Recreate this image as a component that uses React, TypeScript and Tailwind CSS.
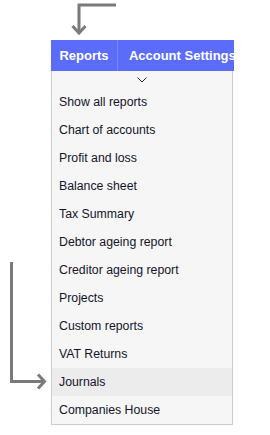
const items = [
  "Show all reports",
  "Chart of accounts",
  "Profit and loss",
  "Balance sheet",
  "Tax Summary",
  "Debtor ageing report",
  "Creditor ageing report",
  "Projects",
  "Custom reports",
  "VAT Returns",
  "Journals",
  "Companies House",
]

export default function App() {
  return (
    <div className="relative h-[435px] w-[270px] overflow-hidden bg-white font-['Liberation_Sans',Arial,sans-serif]">
      {/* annotation arrows */}
      <svg className="absolute left-0 top-0" width="120" height="40" viewBox="0 0 120 40">
        <path d="M116 5 H79 V33" fill="none" stroke="#7a7a7a" strokeWidth="3" />
        <path d="M72.5 26 L79 33 L85.5 26" fill="none" stroke="#7a7a7a" strokeWidth="3" />
      </svg>
      <svg className="absolute left-0 top-[258px]" width="50" height="140" viewBox="0 0 50 140">
        <path d="M11.5 4 V123.5 H44" fill="none" stroke="#7a7a7a" strokeWidth="3" />
        <path d="M38 116.5 L44.5 123.5 L38 130.5" fill="none" stroke="#7a7a7a" strokeWidth="3" />
      </svg>

      <div className="ml-[51px] pt-[40px] w-[183px]">
        <div className="flex h-[31px] items-center bg-[#5c6cfa] text-[13px] font-bold text-white">
          <div className="flex h-full w-[68px] items-center justify-center border-r border-[#7a88ff]">
            Reports
          </div>
          <div className="whitespace-nowrap overflow-hidden pl-[11px]">Account Settings</div>
        </div>
        <div className="w-[182px] border border-t-0 border-[#cccccc] bg-[#f6f6f6]">
          <div className="flex h-[17px] items-start justify-center pt-[6px]">
            <svg width="10" height="6" viewBox="0 0 10 6">
              <path d="M0.5 0.5 L5 5 L9.5 0.5" fill="none" stroke="#222" strokeWidth="1" />
            </svg>
          </div>
          {items.map((it) => (
            <div
              key={it}
              className={
                "flex h-[28px] items-center pl-[7px] text-[12.3px] text-[#14142b] " +
                (it === "Journals" ? "bg-[#ececec]" : "")
              }
            >
              {it}
            </div>
          ))}
        </div>
      </div>
    </div>
  )
}
